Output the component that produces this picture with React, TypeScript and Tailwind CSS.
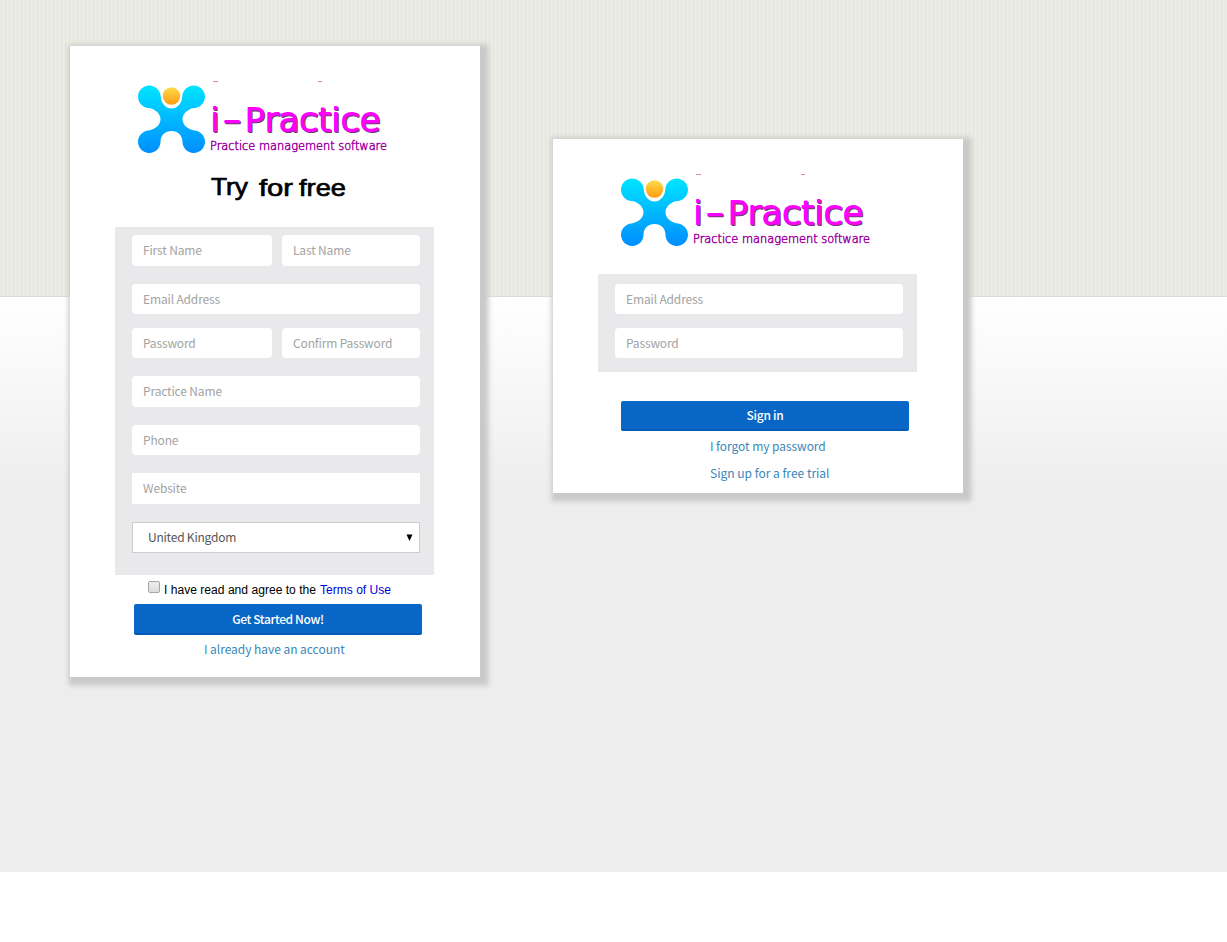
import React from "react";

const cardClass =
  "w-[410px] shrink-0 bg-white shadow-[3px_3px_5px_5.5px_#c9c9c9]";

function Logo() {
  return (
    <svg className="block h-[80px] w-[264px]" viewBox="0 0 264 80">
      <defs>
        <linearGradient id="body" x1="0" y1="7" x2="0" y2="74" gradientUnits="userSpaceOnUse">
          <stop offset="0" stopColor="#00e4ff" />
          <stop offset="0.5" stopColor="#00b8ff" />
          <stop offset="1" stopColor="#008eff" />
        </linearGradient>
        <linearGradient id="head" x1="0" y1="0" x2="0" y2="1">
          <stop offset="0" stopColor="#ffdc4a" />
          <stop offset="1" stopColor="#ff9c12" />
        </linearGradient>
      </defs>
      <path
        d="M16.3 6.5C22.500 6.500 27.500 11.500 27.800 17.700C28.300 24.500 33 29.500 38.500 29.500C44 29.500 48.700 24.500 49.200 17.700C49.500 11.500 54.500 6.500 60.700 6.500C67 6.500 72 11.500 72 17.700C72 23.900 67 28.500 61.500 29C56 29.500 49.500 34 49.500 40.300C49.500 46.500 56 51 61.500 51.500C67 52 72 56.500 72 62.800C72 69 67 74 60.700 74C54.500 74 49.500 69 49.500 62.800C49.500 56.500 45 52 38.500 52C32 52 27.500 56.500 27.500 62.800C27.500 69 22.500 74 16.300 74C10 74 5 69 5 62.800C5 56.500 10 52 15.500 51.500C21 51 27.500 46.500 27.500 40.300C27.500 34 21 29.500 15.500 29C10 28.500 5 23.900 5 17.700C5 11.500 10 6.500 16.300 6.500Z"
        fill="url(#body)"
      />
      <circle cx="38.500" cy="17" r="10.500" fill="white" />
      <circle cx="38.500" cy="17" r="8.800" fill="url(#head)" />
      <path d="M80 2.500h5M185 2.500h4" stroke="#d25b70" strokeWidth="1" opacity="0.7" />
      <g fontFamily="'DejaVu Sans', sans-serif" fontWeight="200" strokeLinejoin="round">
        <g fill="#6b3a70" stroke="#6b3a70" strokeWidth="2.200" fontSize="32">
          <text x="78.500" y="52.500">i</text>
          <text x="91.500" y="51.500" textLength="17" lengthAdjust="spacingAndGlyphs">-</text>
          <text x="112.500" y="52.500" textLength="136" lengthAdjust="spacingAndGlyphs">Practice</text>
        </g>
        <g fill="#ff00ff" stroke="#ff00ff" strokeWidth="2" fontSize="32">
          <text x="77.500" y="51.500">i</text>
          <text x="90.500" y="50.500" textLength="17" lengthAdjust="spacingAndGlyphs">-</text>
          <text x="111.500" y="51.500" textLength="136" lengthAdjust="spacingAndGlyphs">Practice</text>
        </g>
        <text x="77" y="70.500" fontSize="12" stroke="#a000a0" strokeWidth="0.500" fill="#a000a0" textLength="177" lengthAdjust="spacingAndGlyphs">
          Practice management software
        </text>
      </g>
    </svg>
  );
}

function Field({ label, className = "" }: { label: string; className?: string }) {
  return (
    <div
      className={`flex items-center bg-white pb-px pl-[11px] text-[12px] leading-none tracking-[-0.15px] text-[#a3a3a3] ${className}`}
    >
      <span>{label}</span>
    </div>
  );
}

function SignUp() {
  return (
    <section className={`${cardClass} mt-[46px] h-[631px]`}>
      <div className="ml-[63px] pt-[33px]">
        <Logo />
      </div>
      <h1 className="ml-[140px] mt-[13px] h-[34px]">
        <svg className="block h-[34px] w-[140px]" viewBox="0 0 140 34">
          <g fontFamily="Liberation Sans, sans-serif" fontSize="24" stroke="black" strokeWidth="0.700">
            <text x="1" y="23" textLength="37" lengthAdjust="spacingAndGlyphs">Try</text>
            <text x="49" y="24" textLength="34" lengthAdjust="spacingAndGlyphs">for</text>
            <text x="89" y="24" textLength="47" lengthAdjust="spacingAndGlyphs">free</text>
          </g>
        </svg>
      </h1>
      <div className="ml-[45px] mt-[21px] h-[348px] w-[319px] bg-[#e9e9eb] pl-[17px] pt-[8px]">
        <div className="flex gap-[10px]">
          <Field label="First Name" className="h-[31px] w-[140px] rounded pb-[3px]" />
          <Field label="Last Name" className="h-[31px] w-[138px] rounded pb-[3px]" />
        </div>
        <Field label="Email Address" className="mt-[18px] h-[30px] w-[288px] rounded" />
        <div className="mt-[14px] flex gap-[10px]">
          <Field label="Password" className="h-[30px] w-[140px] rounded" />
          <Field label="Confirm Password" className="h-[30px] w-[138px] rounded" />
        </div>
        <Field label="Practice Name" className="mt-[18px] h-[31px] w-[288px] rounded" />
        <Field label="Phone" className="mt-[18px] h-[30px] w-[288px] rounded" />
        <Field label="Website" className="mt-[18px] h-[31px] w-[288px]" />
        <div className="mt-[18px] flex h-[31px] w-[288px] items-center justify-between border border-[#cccccc] bg-white pb-px pl-[15px] pr-[6px] text-[12px] leading-none tracking-[-0.22px] text-[#555555]">
          <span>United Kingdom</span>
          <svg className="h-[7px] w-[7px]" viewBox="0 0 7 7">
            <path d="M0.500 0.500h6L3.500 7Z" fill="black" />
          </svg>
        </div>
      </div>
      <div className="ml-[78px] flex h-[29px] items-start pt-[6px]">
        <span className="h-[12px] w-[12px] rounded-[2px] border border-[#a6a6a6] bg-linear-to-b from-[#eeeeee] to-[#dcdcdc]" />
        <svg className="ml-[3px] block h-[20px] w-[232px]" viewBox="0 0 232 20">
          <g fontFamily="Liberation Sans, sans-serif" fontSize="12.500">
            <text x="1" y="13" textLength="152" lengthAdjust="spacingAndGlyphs">I have read and agree to the</text>
            <text x="157" y="13" fill="#0000dd" textLength="71" lengthAdjust="spacingAndGlyphs">Terms of Use</text>
          </g>
        </svg>
      </div>
      <button className="ml-[64px] flex h-[31px] w-[288px] items-center justify-center rounded-[2px] border-b-2 border-[#005bb8] bg-[#0866c6] text-[12px] font-medium leading-none tracking-[-0.38px] text-white">
        Get Started Now!
      </button>
      <a className="ml-[134px] mt-[5px] block text-[12px] leading-[18px] tracking-[-0.04px] text-[#3a87b7]">
        I already have an account
      </a>
    </section>
  );
}

function SignIn() {
  return (
    <section className={`${cardClass} mt-[139px] h-[354px]`}>
      <div className="ml-[63px] pt-[33px]">
        <Logo />
      </div>
      <div className="ml-[45px] mt-[22px] h-[98px] w-[319px] bg-[#e9e9eb] pl-[17px] pt-[10px]">
        <Field label="Email Address" className="h-[30px] w-[288px] rounded" />
        <Field label="Password" className="mt-[14px] h-[30px] w-[288px] rounded" />
      </div>
      <button className="ml-[68px] mt-[29px] flex h-[30px] w-[288px] items-center justify-center rounded-[2px] border-b-2 border-[#005bb8] bg-[#0866c6] text-[12px] font-medium leading-none tracking-[-0.25px] text-white">
        Sign in
      </button>
      <a className="ml-[157px] mt-[6px] block text-[12px] leading-[18px] tracking-[-0.05px] text-[#3a87b7]">
        I forgot my password
      </a>
      <a className="ml-[157px] mt-[9px] block text-[12px] leading-[18px] text-[#3a87b7]">
        Sign up for a free trial
      </a>
    </section>
  );
}

export default function App() {
  return (
    <main className="grid h-[942px] w-[1227px] overflow-hidden bg-white font-['Noto_Sans_CJK_SC',sans-serif]">
      <div className="col-start-1 row-start-1">
        <div className="h-[297px] border-b border-[#dcdcdc] bg-[repeating-linear-gradient(90deg,#ebece4_0px,#ebece4_1px,#e4e6dc_1px,#e4e6dc_2px,#ebece4_2px,#ebece4_4px)]" />
        <div className="h-[575px] bg-[linear-gradient(#ffffff,#ededed_200px)]" />
      </div>
      <div className="col-start-1 row-start-1 flex items-start gap-[73px] pl-[70px]">
        <SignUp />
        <SignIn />
      </div>
    </main>
  );
}
